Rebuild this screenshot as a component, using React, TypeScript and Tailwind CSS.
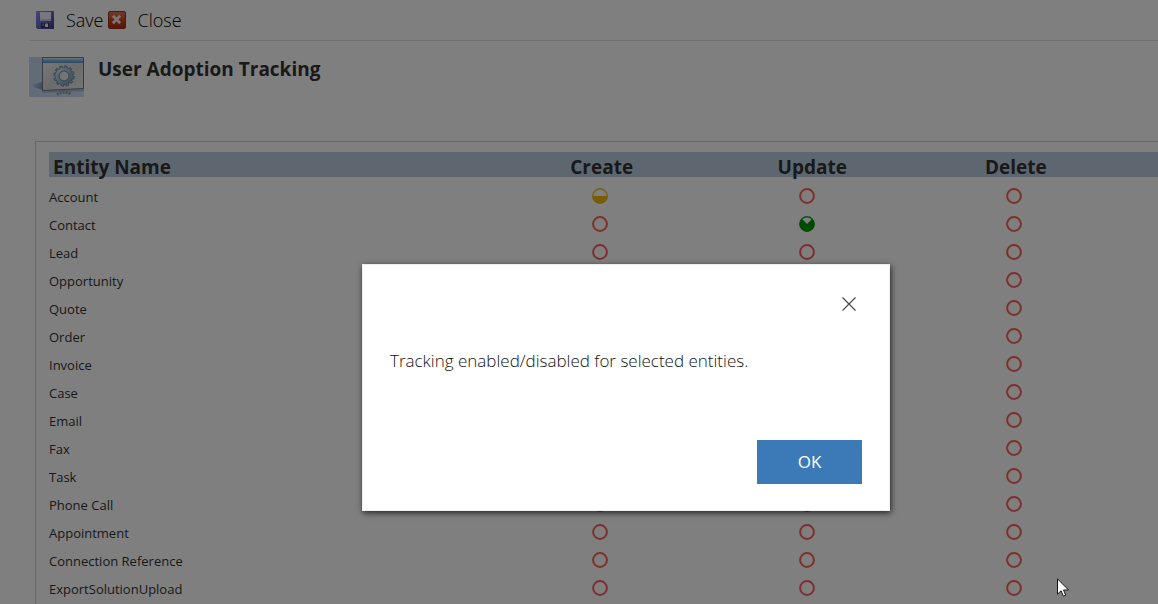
import React from "react";

type Status = "none" | "half" | "most";

const entities: { name: string; create?: Status; update?: Status; remove?: Status }[] = [
  { name: "Account", create: "half" },
  { name: "Contact", update: "most" },
  { name: "Lead" },
  { name: "Opportunity" },
  { name: "Quote" },
  { name: "Order" },
  { name: "Invoice" },
  { name: "Case" },
  { name: "Email" },
  { name: "Fax" },
  { name: "Task" },
  { name: "Phone Call" },
  { name: "Appointment" },
  { name: "Connection Reference" },
  { name: "ExportSolutionUpload" },
];

function StatusIcon({ status = "none" }: { status?: Status }) {
  return (
    <svg viewBox="0 0 16 16" className="block h-4 w-4">
      {status === "none" && <circle cx="8" cy="8" r="6.9" fill="none" stroke="#f8605a" strokeWidth="2" />}
      {status === "half" && (
        <>
          <circle cx="8" cy="8" r="7.2" fill="none" stroke="#f0c020" strokeWidth="1.4" />
          <path d="M.5 8h15a7.5 7.5 0 0 1-15 0z" fill="#f0b800" />
        </>
      )}
      {status === "most" && (
        <>
          <circle cx="8" cy="8" r="7.2" fill="none" stroke="#20a830" strokeWidth="1.4" />
          <path d="M8 8 13.3 2.7a7.5 7.5 0 1 1-10.6 0z" fill="#009400" />
        </>
      )}
    </svg>
  );
}

function SaveIcon() {
  return (
    <svg viewBox="0 0 18 18" className="h-[18px] w-[18px]">
      <defs>
        <linearGradient id="disk" x1="0" y1="0" x2="1" y2="1">
          <stop offset="0" stopColor="#9090e8" />
          <stop offset=".5" stopColor="#6868c8" />
          <stop offset="1" stopColor="#383890" />
        </linearGradient>
      </defs>
      <path d="M0 0h18v18H1.5L0 16.5z" fill="url(#disk)" />
      <path d="M4 1h11v9H4z" fill="#eef0ff" />
      <path d="M4 8h11v2H4z" fill="#c8ccf0" />
      <path d="M5 12h8v5H5z" fill="#34344a" />
      <path d="M9 12.5h3v3.5H9z" fill="#e8e8f4" />
      <path d="M6 12.5h2V15H6z" fill="#77778c" />
    </svg>
  );
}

function CloseIcon() {
  return (
    <svg viewBox="0 0 18 18" className="h-[18px] w-[18px]">
      <defs>
        <linearGradient id="red" x1="0" y1="0" x2="0" y2="1">
          <stop offset="0" stopColor="#e07a66" />
          <stop offset=".5" stopColor="#d04420" />
          <stop offset="1" stopColor="#b02c08" />
        </linearGradient>
      </defs>
      <rect x=".5" y=".5" width="17" height="17" rx="1.5" fill="url(#red)" stroke="#a03018" />
      <path d="m4.8 4.8 7.4 7.4M12.2 4.8l-7.4 7.4" stroke="#f4e8e8" strokeWidth="2.8" />
    </svg>
  );
}

function SettingsPicture() {
  return (
    <svg viewBox="0 0 55 40" className="h-10 w-[55px] shrink-0">
      <defs>
        <linearGradient id="sky" x1="0" y1="0" x2="1" y2="0">
          <stop offset="0" stopColor="#c4d6f2" />
          <stop offset="1" stopColor="#d0dcec" />
        </linearGradient>
        <linearGradient id="shade" x1="0" y1="0" x2="1" y2="0">
          <stop offset="0" stopColor="#b4c8e6" />
          <stop offset="1" stopColor="#8496b4" />
        </linearGradient>
        <linearGradient id="bar" x1="0" y1="0" x2="0" y2="1">
          <stop offset="0" stopColor="#a8cdf0" />
          <stop offset="1" stopColor="#5890c8" />
        </linearGradient>
        <linearGradient id="panel" x1="0" y1="0" x2="1" y2="1">
          <stop offset="0" stopColor="#f4f4f4" />
          <stop offset=".5" stopColor="#d8d8d8" />
          <stop offset="1" stopColor="#e8e8e8" />
        </linearGradient>
        <linearGradient id="gear" x1="0" y1="0" x2="1" y2="1">
          <stop offset="0" stopColor="#dce8f0" />
          <stop offset=".5" stopColor="#9cc0dc" />
          <stop offset="1" stopColor="#68a4d0" />
        </linearGradient>
      </defs>
      <path d="M0 0h55v40H0z" fill="url(#sky)" />
      <path d="M3 28 13 25v8L5 30z" fill="url(#shade)" />
      <path d="M13 33.5 55 32v2l-42 2z" fill="#a8b8cc" />
      <path d="M13.5.5h41v31l-41 2z" fill="url(#panel)" stroke="#69788a" />
      <path d="M14 1h40v1H14z" fill="#d4e4f4" />
      <path d="M14 2h40v4H14z" fill="url(#bar)" />
      <circle cx="35" cy="19" r="9" fill="none" stroke="#6a88a0" strokeWidth="3.4" strokeDasharray="2.9 1.81" />
      <circle cx="35" cy="19" r="7" fill="none" stroke="#6a88a0" strokeWidth="4.6" />
      <circle cx="35" cy="19" r="9" fill="none" stroke="#a4c0d8" strokeWidth="1.6" strokeDasharray="1.5 3.21" strokeDashoffset="-.7" />
      <circle cx="35" cy="19" r="7" fill="none" stroke="url(#gear)" strokeWidth="3.2" />
      <circle cx="35" cy="19" r="4.9" fill="#e8e8e8" stroke="#7c90a2" />
      <path d="M28 37.5c3-3 11-3 14 0" fill="none" stroke="#88a0b8" strokeWidth="3" strokeDasharray="2 1" />
    </svg>
  );
}

export default function App() {
  return (
    <div className="relative flex h-screen flex-col overflow-hidden bg-white font-['Open_Sans','Noto_Sans',sans-serif] text-[#333]">
      <div className="pl-[29px]">
        <nav className="flex h-[41px] items-center gap-1 border-b border-[#e0e0e0] pl-[7px] text-lg font-light text-black">
          <button type="button" className="flex items-center gap-3">
            <SaveIcon />
            Save
          </button>
          <button type="button" className="flex items-center gap-3">
            <CloseIcon />
            Close
          </button>
        </nav>
        <header className="flex gap-[14px] pt-4">
          <SettingsPicture />
          <h1 className="text-[19px] font-bold leading-6">User Adoption Tracking</h1>
        </header>
      </div>

      <main className="ml-[35px] mt-11 grow border-l border-t border-[#d0d0d0] pl-[13px] pt-[10px]">
        <table className="w-full table-fixed border-collapse text-left">
          <colgroup>
            <col className="w-[47%]" />
            <col className="w-[18.7%]" />
            <col className="w-[18.7%]" />
            <col />
          </colgroup>
          <thead>
            <tr className="h-[25px] bg-[#bccddf] text-[19px] leading-[25px]">
              <th className="p-0 pl-1 font-bold">
                <span className="block h-[25px] pt-[3px]">Entity Name</span>
              </th>
              {["Create", "Update", "Delete"].map((label) => (
                <th key={label} className="p-0 font-bold">
                  <span className="block h-[25px] pt-[3px]">{label}</span>
                </th>
              ))}
            </tr>
          </thead>
          <tbody>
            {entities.map((entity) => (
              <tr key={entity.name} className="h-7 align-top text-[13px] leading-4">
                <td className="p-0 pt-3">{entity.name}</td>
                <td className="p-0 pl-[22px] pt-[11px]"><StatusIcon status={entity.create} /></td>
                <td className="p-0 pl-[21px] pt-[11px]"><StatusIcon status={entity.update} /></td>
                <td className="p-0 pl-[21px] pt-[11px]"><StatusIcon status={entity.remove} /></td>
              </tr>
            ))}
          </tbody>
        </table>
      </main>

      <div className="absolute inset-0 flex items-start justify-center bg-black/50 pl-[94px] pt-[264px]">
        <div
          role="dialog"
          aria-modal="true"
          aria-labelledby="dialog-message"
          className="flex w-[528px] flex-col border border-[#eee] bg-white px-[27px] pb-[26px] pt-[26px] shadow-[1px_2px_6px_rgba(0,0,0,0.7)]"
        >
          <button type="button" aria-label="Close dialog" className="flex h-[26px] w-[26px] items-center justify-center self-end">
            <svg viewBox="0 0 14 14" className="h-[14px] w-[14px]" fill="none" stroke="#444" strokeWidth="1.1">
              <path d="m.5.5 13 13M13.5.5l-13 13" />
            </svg>
          </button>
          <p id="dialog-message" className="mt-8 text-[17px] font-light leading-6 text-[#111]">
            Tracking enabled/disabled for selected entities.
          </p>
          <button type="button" className="mt-[67px] h-11 w-[105px] self-end bg-[#3b79b7] text-[17px] text-white">
            OK
          </button>
        </div>
      </div>

      <svg viewBox="0 0 12 19" className="pointer-events-none absolute left-[1057px] top-[578px] h-[19px] w-3">
        <path d="M.5.8v15.4l3.6-3.4 2.3 5.4 2.4-1-2.3-5.2h5z" fill="#fff" stroke="#15151f" strokeLinejoin="round" />
      </svg>
    </div>
  );
}
